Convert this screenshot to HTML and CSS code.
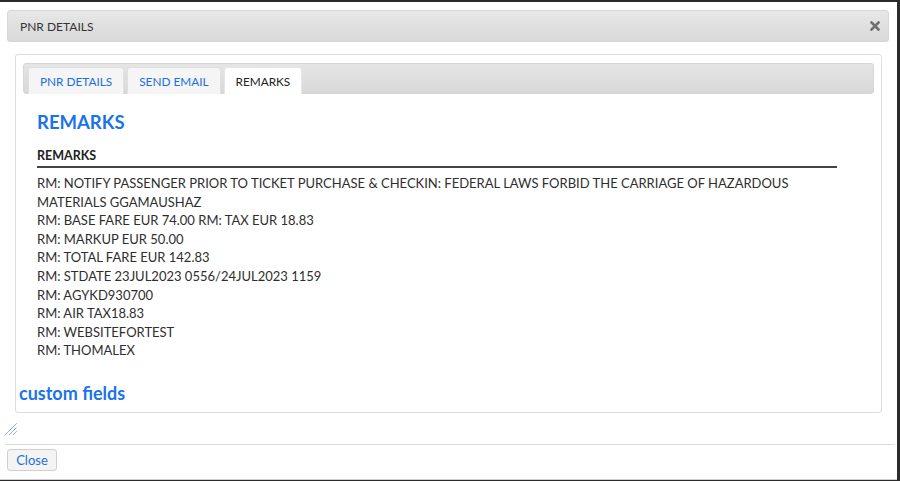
FILE: index.html
```html
<!DOCTYPE html>
<html>
<head>
<meta charset="utf-8">
<link rel="stylesheet" href="styles.css">
</head>
<body>
<div class="dialog">
  <div class="titlebar">
    <span class="title">PNR DETAILS</span>
    <svg class="close-x" width="10" height="10" viewBox="0 0 10 10"><path d="M1.5 1.5 L8.5 8.5 M8.5 1.5 L1.5 8.5" stroke="#6f6f6f" stroke-width="2.6" stroke-linecap="square"/></svg>
  </div>
  <div class="panel">
    <div class="tabbar">
      <div class="tab">PNR DETAILS</div>
      <div class="tab">SEND EMAIL</div>
      <div class="tab active">REMARKS</div>
    </div>
    <div class="content">
      <h2 class="heading">REMARKS</h2>
      <div class="subhead">REMARKS</div>
      <div class="lines">
        <div>RM: NOTIFY PASSENGER PRIOR TO TICKET PURCHASE &amp; CHECKIN: FEDERAL LAWS FORBID THE CARRIAGE OF HAZARDOUS MATERIALS GGAMAUSHAZ</div>
        <div>RM: BASE FARE EUR 74.00 RM: TAX EUR 18.83</div>
        <div>RM: MARKUP EUR 50.00</div>
        <div>RM: TOTAL FARE EUR 142.83</div>
        <div>RM: STDATE 23JUL2023 0556/24JUL2023 1159</div>
        <div>RM: AGYKD930700</div>
        <div>RM: AIR TAX18.83</div>
        <div>RM: WEBSITEFORTEST</div>
        <div>RM: THOMALEX</div>
      </div>
    </div>
    <h3 class="custom">custom fields</h3>
  </div>
  <div class="resize">
    <svg width="12" height="12" viewBox="0 0 12 12"><path d="M0.5 11.5 L11.5 0.5 M4.5 11.5 L11.5 4.5 M8.5 11.5 L11.5 8.5" stroke="#2f6fd0" stroke-width="1" stroke-dasharray="1 0.6"/></svg>
  </div>
  <div class="footer">
    <button class="btn">Close</button>
  </div>
</div>
</body>
</html>
```

FILE: styles.css
```css
html, body {
  margin: 0;
  padding: 0;
  background: #2b2b2b;
  font-family: Lato, "Open Sans", Arial, sans-serif;
  color: #333;
}
.dialog {
  margin-top: 2px;
  width: 897px;
  height: 478px;
  background: #fff;
  box-sizing: border-box;
  border-bottom: 1px solid #cfcfcf;
  padding: 8px 8px 0 7px;
}
.titlebar {
  height: 32px;
  box-sizing: border-box;
  border: 1px solid #d6d6d6;
  border-radius: 3px;
  background: linear-gradient(#e7e7e7, #d9d9d9);
  display: flex;
  align-items: center;
  justify-content: space-between;
  padding: 0 8px 0 12px;
}
.title {
  font-size: 12px;
  color: #333;
  padding-top: 1px;
}
.close-x { display: block; }
.panel {
  margin: 12px 7px 0 8px;
  height: 359px;
  box-sizing: border-box;
  border: 1px solid #dcdcdc;
  border-radius: 3px;
  padding: 8px 7px 0 7px;
}
.tabbar {
  height: 31px;
  box-sizing: border-box;
  border: 1px solid #d6d6d6;
  border-radius: 3px;
  background: linear-gradient(#e5e5e5, #d8d8d8);
  display: flex;
  align-items: flex-end;
  gap: 3px;
  padding: 0 0 0 4px;
}
.tab {
  height: 27px;
  box-sizing: border-box;
  padding: 0 11px;
  display: flex;
  align-items: center;
  font-size: 11.8px;
  color: #1a6fe0;
  background: #f5f5f5;
  border: 1px solid #e0e0e0;
  border-bottom: none;
  border-radius: 3px 3px 0 0;
  margin-bottom: -1px;
}
.tab.active {
  background: #fff;
  color: #222;
  border-color: #e6e6e6;
}
.content {
  padding: 0 0 0 14px;
  width: 800px;
}
.heading {
  margin: 18px 0 0 0;
  font-size: 18.5px;
  line-height: 21px;
  font-weight: bold;
  color: #1a73e8;
}
.subhead {
  margin-top: 15px;
  font-size: 12.5px;
  font-weight: bold;
  line-height: 15px;
  color: #222;
  padding-bottom: 3px;
  border-bottom: 2px solid #444;
}
.lines {
  margin-top: 6px;
  font-size: 13px;
  line-height: 18.6px;
  color: #2e2e2e;
}
.custom {
  margin: 22px 0 0 -4px;
  font-size: 18px;
  line-height: 22px;
  font-weight: bold;
  color: #1a73e8;
}
.resize {
  height: 12px;
  margin: 10px 0 0 -2px;
}
.resize svg { display: block; }
.footer {
  margin: 9px -6px 0 -2px;
  border-top: 1px solid #dcdcdc;
  padding: 4px 0 0 2px;
}
.btn {
  height: 22px;
  width: 50px;
  padding: 0;
  font-family: Lato, Arial, sans-serif;
  font-size: 13px;
  color: #1a6fe0;
  background: #f4f4f4;
  border: 1px solid #cfcfcf;
  border-radius: 3px;
}
```
